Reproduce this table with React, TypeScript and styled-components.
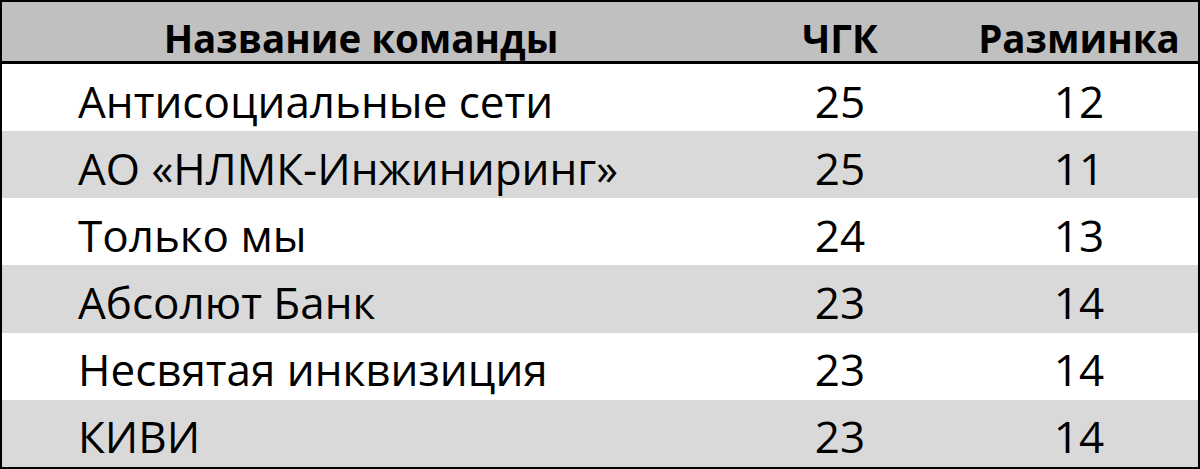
import styled, { createGlobalStyle } from "styled-components";

type Team = {
    name: string
    chgk: number
    warmup: number
}

const teams: Team[] = [
    {name: 'Антисоциальные сети', chgk: 25, warmup: 12},
    {name: 'АО «НЛМК-Инжиниринг»', chgk: 25, warmup: 11},
    {name: 'Только мы', chgk: 24, warmup: 13},
    {name: 'Абсолют Банк', chgk: 23, warmup: 14},
    {name: 'Несвятая инквизиция', chgk: 23, warmup: 14},
    {name: 'КИВИ', chgk: 23, warmup: 14},
]

const GlobalStyle = createGlobalStyle`
    html, body {
        margin: 0;
        padding: 0;
        background: #ffffff;
    }
    body {
        font-family: "Open Sans", "Noto Sans", sans-serif;
        color: #000000;
    }
`

export default function App() {
    return (
        <>
            <GlobalStyle/>
            <StyledTable>
                <StyledHeader>
                    <StyledHeadCell>Название команды</StyledHeadCell>
                    <StyledHeadCell>ЧГК</StyledHeadCell>
                    <StyledHeadCell>Разминка</StyledHeadCell>
                </StyledHeader>
                {teams.map((team, i) => (
                    <StyledRow key={team.name} $striped={i % 2 === 1}>
                        <StyledNameCell>{team.name}</StyledNameCell>
                        <StyledNumCell>{team.chgk}</StyledNumCell>
                        <StyledNumCell>{team.warmup}</StyledNumCell>
                    </StyledRow>
                ))}
            </StyledTable>
        </>
    )
}

const StyledTable = styled.div`
    width: 1200px;
    height: 469px;
    box-sizing: border-box;
    border: 2px solid #000;
    display: grid;
    grid-template-rows: 62px repeat(6, 1fr);
    overflow: hidden;
`

const StyledHeader = styled.div`
    display: grid;
    grid-template-columns: 718px 240px 1fr;
    align-items: center;
    background: #c0c0c0;
    border-bottom: 3px solid #000;
    box-sizing: content-box;
`

const StyledHeadCell = styled.div`
    font-weight: 700;
    font-size: 38.5px;
    text-align: center;
    padding-top: 10px;
    white-space: nowrap;
`

const StyledRow = styled.div<{ $striped: boolean }>`
    display: grid;
    grid-template-columns: 718px 240px 1fr;
    align-items: center;
    background: ${({$striped}) => $striped ? '#d9d9d9' : '#ffffff'};
`

const StyledNameCell = styled.div`
    font-size: 44px;
    padding-left: 76px;
    padding-top: 6px;
    white-space: nowrap;
`

const StyledNumCell = styled.div`
    font-size: 44px;
    text-align: center;
    padding-top: 6px;
`
